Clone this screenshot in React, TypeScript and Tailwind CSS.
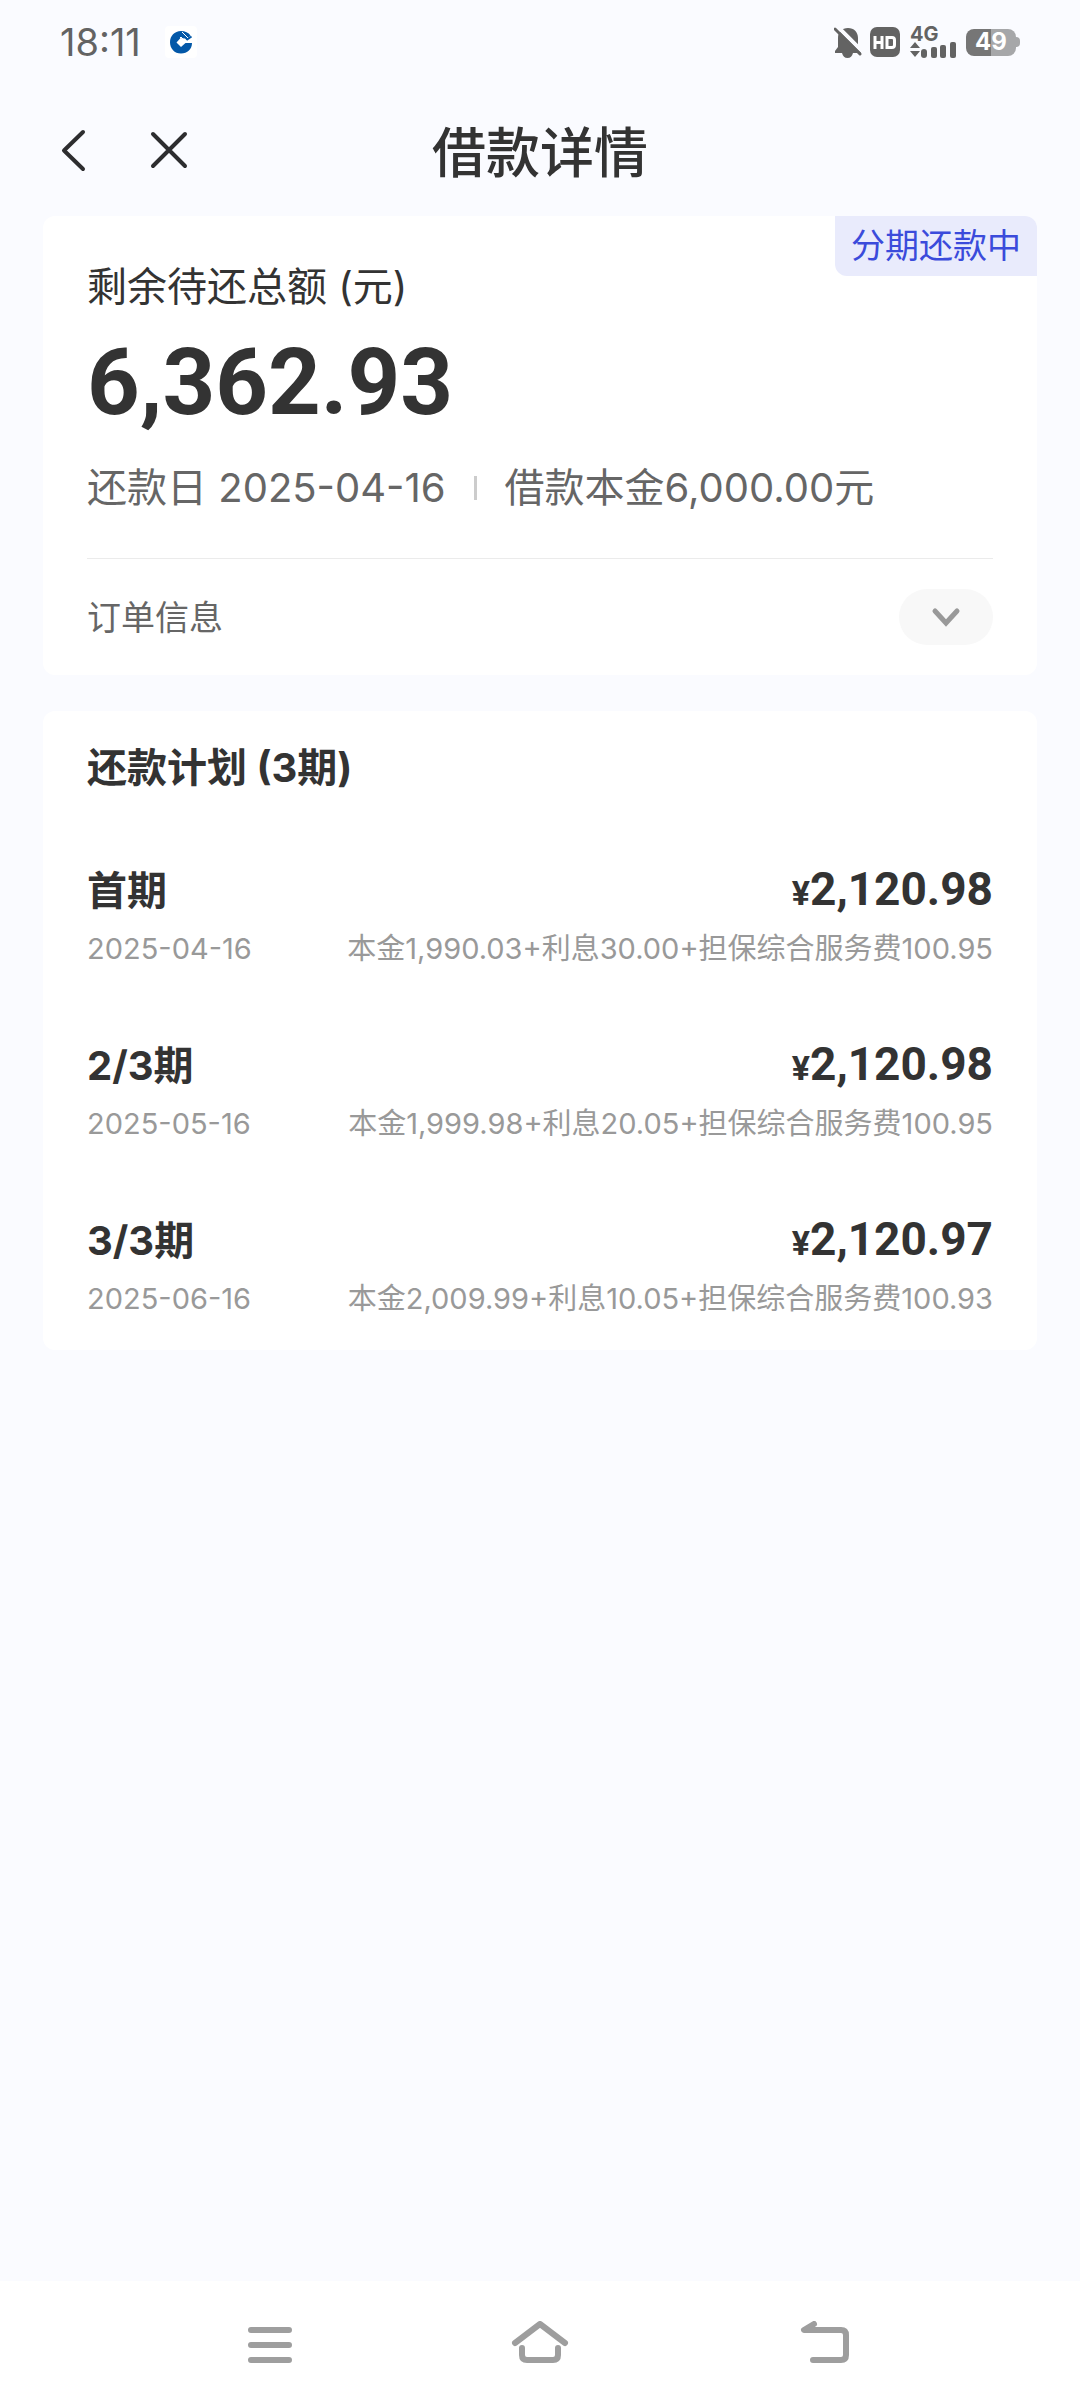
const installments = [
  {
    name: "首期",
    date: "2025-04-16",
    amount: "2,120.98",
    detail: "本金1,990.03+利息30.00+担保综合服务费100.95",
  },
  {
    name: "2/3期",
    date: "2025-05-16",
    amount: "2,120.98",
    detail: "本金1,999.98+利息20.05+担保综合服务费100.95",
  },
  {
    name: "3/3期",
    date: "2025-06-16",
    amount: "2,120.97",
    detail: "本金2,009.99+利息10.05+担保综合服务费100.93",
  },
];

function BankIcon() {
  return (
    <svg width="32" height="32" viewBox="0 0 32 32" aria-hidden="true">
      <rect width="32" height="32" rx="4" fill="#fff" />
      <path
        fillRule="evenodd"
        fill="#0358a8"
        d="M16 5C20 5 23.500 6.500 25.500 9.500L21.500 14L20 12.500L15.500 12L11.500 16.500L16 21L20.500 17H27C27 23 22.500 27.500 16 27.500C9.500 27.500 5 22.500 5 16.200C5 10 9.500 5 16 5Z"
      />
      <path d="M17 6L24 13M15 12L16 11L21.500 16.500" stroke="#fff" strokeWidth="1" fill="none" />
      <path d="M21.500 14L26.500 10.500" stroke="#0358a8" strokeWidth="2" />
    </svg>
  );
}

function BellOffIcon() {
  return (
    <svg width="28" height="32" viewBox="0 0 28 32" aria-hidden="true">
      <path
        fill="#636363"
        d="M4 12C4 6 8 2 14 2S24 6 24 12V21L27 25V27H19C18 30.500 16.500 32 13.500 32S9 30.500 8 27H1V25L4 21Z"
      />
      <path d="M3 0L30 27" stroke="#fafbff" strokeWidth="4" />
      <path d="M1 3L26 28" stroke="#636363" strokeWidth="3" strokeLinecap="round" />
    </svg>
  );
}

function HdIcon() {
  return (
    <svg width="30" height="30" viewBox="0 0 30 30" aria-hidden="true">
      <rect width="30" height="30" rx="7" fill="#636363" />
      <path
        d="M5 9V22M12 9V22M5 15.500H12M17 10.500H22Q24.500 10.500 24.500 13V18Q24.500 20.500 22 20.500H17Z"
        fill="none"
        stroke="#fff"
        strokeWidth="3"
      />
    </svg>
  );
}

function SignalIcon() {
  return (
    <svg width="46" height="16" viewBox="0 0 46 16" fill="#636363" aria-hidden="true">
      <path d="M5 0L10 6H0ZM0 9H10L5 15Z" />
      <rect x="11" y="7" width="6" height="9" rx="3" />
      <rect x="21" y="5" width="6" height="11" rx="2" />
      <rect x="30" y="3" width="6" height="13" rx="2" />
      <rect x="40" y="0" width="6" height="16" rx="2" />
    </svg>
  );
}

function StatusBar() {
  return (
    <div className="flex h-[84px] items-center justify-between px-[60px] text-[#636363]">
      <div className="flex items-center gap-6">
        <span className="text-[38px] leading-none">18:11</span>
        <BankIcon />
      </div>

      <div className="flex items-center gap-2">
        <BellOffIcon />
        <HdIcon />
        <div className="ml-0.5 flex w-[46px] flex-col">
          <span className="text-[20px] leading-[15px] font-bold">4G</span>
          <SignalIcon />
        </div>
        <div className="ml-0.5 flex items-center">
          <div className="flex h-[27px] w-[50px] items-center justify-center rounded-lg bg-linear-to-r from-[#767676] from-50% to-[#a6a7a9] to-50%">
            <span className="text-[24px] leading-none font-bold text-white">49</span>
          </div>
          <div className="h-[10px] w-1 rounded-r bg-[#a6a7a9]" />
        </div>
      </div>
    </div>
  );
}

function PageHeader() {
  return (
    <header className="grid h-[132px] grid-cols-[1fr_auto_1fr] items-center px-[60px]">
      <div className="flex items-center gap-[62px]">
        <button type="button" aria-label="返回">
          <svg width="28" height="44" viewBox="0 0 28 44" aria-hidden="true">
            <path
              d="M23 4L4 22.500L23 41"
              fill="none"
              stroke="#2d2d2f"
              strokeWidth="4"
              strokeLinecap="round"
              strokeLinejoin="round"
            />
          </svg>
        </button>
        <button type="button" aria-label="关闭">
          <svg width="38" height="44" viewBox="0 0 38 44" aria-hidden="true">
            <path
              d="M3 6L35 38M35 6L3 38"
              fill="none"
              stroke="#2d2d2f"
              strokeWidth="4"
              strokeLinecap="round"
            />
          </svg>
        </button>
      </div>
      <h1 className="pt-2 text-[54px] leading-[72px] font-medium">借款详情</h1>
    </header>
  );
}

function SummaryCard() {
  return (
    <section className="relative rounded-xl bg-white px-11 pt-10">
      <span className="absolute top-0 right-0 rounded-tr-xl rounded-bl-xl bg-[#e9ebfc] px-4 text-[34px] leading-[60px] text-[#3b4bdb]">
        分期还款中
      </span>

      <p className="text-[40px] leading-[62px]">剩余待还总额 (元)</p>
      <p className="font-['Roboto',sans-serif] text-[92px] leading-[130px] font-bold">
        6,362.93
      </p>
      <div className="flex items-center text-[40px] leading-[80px] text-[#666]">
        <span>还款日 2025-04-16</span>
        <span className="mx-7 h-6 w-[3px] bg-[#ccc]" />
        <span>借款本金6,000.00元</span>
      </div>

      <div className="mt-[30px] flex h-[117px] items-center justify-between border-t border-[#ebebeb]">
        <span className="text-[34px] text-[#666]">订单信息</span>
        <button
          type="button"
          aria-label="展开订单信息"
          className="flex h-14 w-[94px] items-center justify-center rounded-full bg-[#f8f8f8]"
        >
          <svg width="32" height="22" viewBox="0 0 32 22" aria-hidden="true">
            <path
              d="M5 5L16 17L27 5"
              fill="none"
              stroke="#999"
              strokeWidth="5"
              strokeLinecap="round"
            />
          </svg>
        </button>
      </div>
    </section>
  );
}

function PlanCard() {
  return (
    <section className="mt-9 rounded-xl bg-white px-11">
      <h2 className="text-[40px] leading-[114px] font-bold">还款计划 (3期)</h2>

      <ul>
        {installments.map((item) => (
          <li key={item.date} className="pt-9 pb-[19px]">
            <div className="flex h-14 items-baseline justify-between leading-[56px] font-bold">
              <span className="text-[40px]">{item.name}</span>
              <span className="font-['Roboto',sans-serif]">
                <span className="text-[34px]">¥</span>
                <span className="text-[46px]">{item.amount}</span>
              </span>
            </div>
            <div className="flex h-16 items-center justify-between text-[29px] text-[#999]">
              <span>{item.date}</span>
              <span>{item.detail}</span>
            </div>
          </li>
        ))}
      </ul>
    </section>
  );
}

function NavigationBar() {
  return (
    <nav className="grid h-[127px] grid-cols-3 items-center justify-items-center bg-white px-[12.5%]">
      <button type="button" aria-label="最近任务">
        <svg width="60" height="48" viewBox="0 0 60 48" aria-hidden="true">
          <path
            d="M11 9H49M11 24H49M11 39H49"
            stroke="#9e9e9e"
            strokeWidth="6"
            strokeLinecap="round"
          />
        </svg>
      </button>
      <button type="button" aria-label="主屏幕">
        <svg width="60" height="48" viewBox="0 0 60 48" aria-hidden="true">
          <path
            d="M5 22L30 3L55 22M12 27V34Q12 39 17 39H43Q48 39 48 34V27"
            fill="none"
            stroke="#9e9e9e"
            strokeWidth="6"
            strokeLinecap="round"
            strokeLinejoin="round"
          />
        </svg>
      </button>
      <button type="button" aria-label="返回上一页">
        <svg width="90" height="48" viewBox="-30 0 90 48" aria-hidden="true">
          <path
            d="M19 3L9 9H46Q51 9 51 14V34Q51 39 46 39H18"
            fill="none"
            stroke="#9e9e9e"
            strokeWidth="6"
            strokeLinecap="round"
            strokeLinejoin="round"
          />
        </svg>
      </button>
    </nav>
  );
}

export default function App() {
  return (
    <div className="flex min-h-screen flex-col bg-[#fafbff] font-['Inter','Noto_Sans_CJK_SC',sans-serif] text-[#333]">
      <StatusBar />
      <PageHeader />

      <main className="flex-1 px-[43px]">
        <SummaryCard />
        <PlanCard />
      </main>

      <NavigationBar />
    </div>
  );
}
